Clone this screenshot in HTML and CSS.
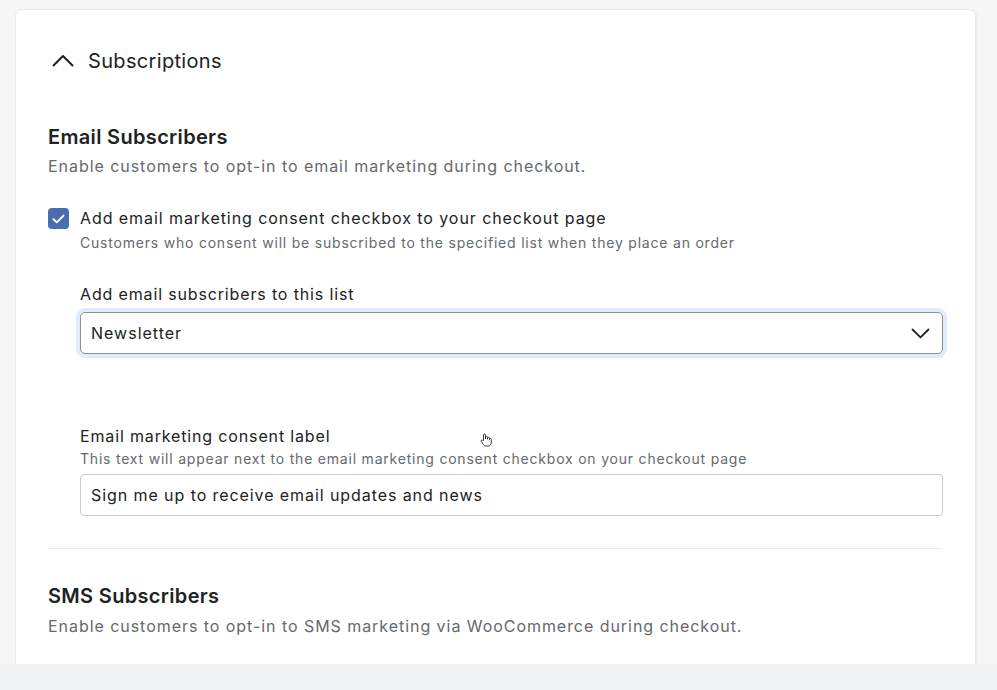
FILE: index.html
```html
<!DOCTYPE html>
<html lang="en">
<head>
<meta charset="utf-8">
<title>Subscriptions</title>
<link rel="stylesheet" href="styles.css">
</head>
<body>
<div class="viewport">
  <section class="card">
    <header class="card-header">
      <svg class="chev-up" width="22" height="13" viewBox="0 0 22 13" aria-hidden="true"><path d="M1.5 11.5 L11 2 L20.5 11.5" fill="none" stroke="#202223" stroke-width="2" stroke-linecap="round" stroke-linejoin="round"/></svg>
      <h2 class="card-title">Subscriptions</h2>
    </header>

    <div class="section">
      <h3 class="section-title">Email Subscribers</h3>
      <p class="section-desc">Enable customers to opt-in to email marketing during checkout.</p>

      <div class="check-row">
        <span class="checkbox">
          <svg width="13" height="10" viewBox="0 0 13 10" aria-hidden="true"><path d="M1.5 5.2 L4.8 8.4 L11.5 1.6" fill="none" stroke="#fff" stroke-width="1.9" stroke-linecap="round" stroke-linejoin="round"/></svg>
        </span>
        <div class="check-text">
          <div class="check-label">Add email marketing consent checkbox to your checkout page</div>
          <div class="help">Customers who consent will be subscribed to the specified list when they place an order</div>
        </div>
      </div>

      <div class="field field-list">
        <div class="field-label">Add email subscribers to this list</div>
        <div class="select">
          <span>Newsletter</span>
          <svg width="19" height="11" viewBox="0 0 19 11" aria-hidden="true"><path d="M1.5 1.5 L9.5 9.3 L17.5 1.5" fill="none" stroke="#202223" stroke-width="1.8" stroke-linecap="round" stroke-linejoin="round"/></svg>
        </div>
      </div>

      <div class="field field-consent">
        <div class="field-label">Email marketing consent label</div>
        <div class="help help-tight">This text will appear next to the email marketing consent checkbox on your checkout page</div>
        <div class="input">Sign me up to receive email updates and news</div>
        <svg class="cursor" width="12" height="14" viewBox="0 0 12 14" aria-hidden="true"><path d="M3.5 7.5 V2 a1 1 0 0 1 2 0 V6 V4.6 a1 1 0 0 1 2 0 V6.2 V5.3 a1 1 0 0 1 2 0 V6.6 V6.2 a1 1 0 0 1 1.8 0 V9.5 c0 2-1.3 3.5-3.3 3.5 H6 c-1.2 0-2-0.6-2.6-1.5 L1.2 8.4 a0.9 0.9 0 0 1 1.4-1.1 Z" fill="#fff" stroke="#222" stroke-width="0.9" stroke-linejoin="round"/></svg>
      </div>
    </div>

    <hr class="divider">

    <div class="section section-sms">
      <h3 class="section-title">SMS Subscribers</h3>
      <p class="section-desc">Enable customers to opt-in to SMS marketing via WooCommerce during checkout.</p>
    </div>
  </section>
</div>
<div class="bottom-strip"></div>
</body>
</html>
```

FILE: styles.css
```css
* { box-sizing: border-box; }

html, body {
  margin: 0;
  padding: 0;
}

body {
  width: 997px;
  height: 690px;
  overflow: hidden;
  background: #f7f7f7;
  font-family: Inter, "Noto Sans", "Liberation Sans", sans-serif;
  color: #202223;
}

.viewport {
  height: 664px;
  padding: 10px 22px 0 16px;
  background: #f7f7f7;
  overflow: hidden;
}

.card {
  height: 654px;
  background: #fff;
  border-radius: 6px 6px 0 0;
  box-shadow: 0 0 0 1px #ebebeb, 0 1px 2px rgba(0,0,0,0.06), 2px 0 3px rgba(0,0,0,0.05);
  padding: 37px 32px 0 32px;
  overflow: hidden;
}

.card-header {
  display: flex;
  align-items: center;
  height: 28px;
  padding-left: 4px;
}

.chev-up { margin-right: 14px; margin-top: -1px; }

.card-title {
  margin: 0;
  font-size: 20px;
  font-weight: 400;
  line-height: 28px;
  letter-spacing: 0.33px;
}

.section { margin-top: 48px; }

.section-title {
  margin: 0;
  font-size: 20px;
  font-weight: 600;
  line-height: 28px;
  letter-spacing: 0.33px;
}

.section-desc {
  margin: 3px 0 0;
  font-size: 16px;
  line-height: 24px;
  color: #66696d;
  letter-spacing: 0.95px;
}

.check-row {
  display: flex;
  align-items: flex-start;
  gap: 11px;
  margin-top: 28px;
}

.checkbox {
  flex: none;
  width: 21px;
  height: 21px;
  margin-top: 2px;
  border-radius: 4px;
  background: #4a6db1;
  display: flex;
  align-items: center;
  justify-content: center;
}

.check-label {
  font-size: 16px;
  line-height: 24px;
  letter-spacing: 0.93px;
}

.help {
  margin-top: 3px;
  font-size: 14px;
  line-height: 20px;
  color: #66696d;
  letter-spacing: 0.79px;
}

.field { margin-left: 32px; }

.field-list { margin-top: 29px; }

.field-label {
  font-size: 16px;
  line-height: 24px;
  letter-spacing: 0.85px;
}

.select {
  margin-top: 6px;
  height: 42px;
  border: 1px solid #8c9196;
  border-radius: 5px;
  box-shadow: 0 0 0 4px #e1ecfb;
  display: flex;
  align-items: center;
  justify-content: space-between;
  padding: 0 12px 0 10px;
  font-size: 16px;
  letter-spacing: 1px;
}

.field-consent {
  margin-top: 70px;
  position: relative;
}

.help-tight { margin-top: 1px; }

.input {
  margin-top: 5px;
  height: 42px;
  border: 1px solid #c9cccf;
  border-radius: 4px;
  display: flex;
  align-items: center;
  padding: 0 10px;
  font-size: 16px;
  letter-spacing: 0.92px;
}

.cursor {
  position: absolute;
  left: 400px;
  top: 9px;
}

.divider {
  margin: 32px 0 0;
  border: 0;
  border-top: 1px solid #ebebeb;
}

.section-sms { margin-top: 33px; }
.section-sms .section-desc { margin-top: 4px; }

.bottom-strip {
  height: 26px;
  background: #f1f2f4;
}
```
